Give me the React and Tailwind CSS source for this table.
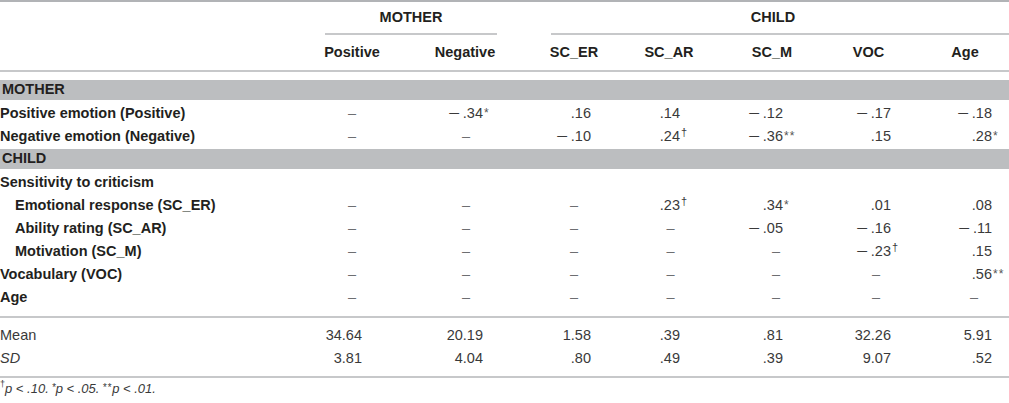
import React from "react";

const grid = "grid grid-cols-[300px_108px_111px_102px_99px_100px_97px_92px]";

// per column: header shift, right gap of the number, shift of the "–" placeholder
const cols = [
  { head: "Positive", headPad: "pr-[4px]", numPad: "pr-[46px]", dashPad: "pr-[4px]" },
  { head: "Negative", headPad: "pl-[3px]", numPad: "pr-[36px]", dashPad: "pl-[5px]" },
  { head: "SC_ER", headPad: "pl-[8px]", numPad: "pr-[30px]", dashPad: "pl-[8px]" },
  { head: "SC_AR", headPad: "pr-[3px]", numPad: "pr-[40px]", dashPad: "" },
  { head: "SC_M", headPad: "pl-[4px]", numPad: "pr-[37px]", dashPad: "pl-[12px]" },
  { head: "VOC", headPad: "", numPad: "pr-[26px]", dashPad: "pl-[15px]" },
  { head: "Age", headPad: "pl-[4px]", numPad: "pr-[17px]", dashPad: "pl-[22px]" },
];

const motherRows = [
  { label: "Positive emotion (Positive)", vals: ["–", "−.34|*", ".16", ".14", "−.12", "−.17", "−.18"] },
  { label: "Negative emotion (Negative)", vals: ["–", "–", "−.10", ".24|†", "−.36|**", ".15", ".28|*"] },
];

const childRows = [
  { label: "Sensitivity to criticism", vals: null },
  { label: "Emotional response (SC_ER)", indent: true, vals: ["–", "–", "–", ".23|†", ".34|*", ".01", ".08"] },
  { label: "Ability rating (SC_AR)", indent: true, vals: ["–", "–", "–", "–", "−.05", "−.16", "−.11"] },
  { label: "Motivation (SC_M)", indent: true, vals: ["–", "–", "–", "–", "–", "−.23|†", ".15"] },
  { label: "Vocabulary (VOC)", vals: ["–", "–", "–", "–", "–", "–", ".56|**"] },
  { label: "Age", vals: ["–", "–", "–", "–", "–", "–", "–"] },
];

const stats = [
  { label: "Mean", vals: ["34.64", "20.19", "1.58", ".39", ".81", "32.26", "5.91"] },
  { label: "SD", italic: true, vals: ["3.81", "4.04", ".80", ".49", ".39", "9.07", ".52"] },
];

function Cell({ value, col }) {
  if (value === "–") {
    return (
      <div className={`flex items-center justify-center text-[#6d6e71] ${col.dashPad}`}>–</div>
    );
  }
  const [num, sup] = value.split("|");
  const neg = num.startsWith("−");
  return (
    <div className={`flex items-center justify-end ${col.numPad}`}>
      <span className="whitespace-nowrap">
        {neg && (
          <span className="inline-block w-[15px]">
            <span className="inline-block origin-left scale-x-[1.4]">−</span>
          </span>
        )}
        {neg ? num.slice(1) : num}
        {sup && (
          <span className="inline-block w-0 whitespace-nowrap">
            {sup === "†" ? (
              <span className="relative -top-[5px] pl-[1px] text-[11px]">†</span>
            ) : (
              <span className="relative -top-[1px] pl-[1px] text-[12px] tracking-[1px] text-[#555]">{sup}</span>
            )}
          </span>
        )}
      </span>
    </div>
  );
}

function DataRow({ row }) {
  return (
    <div className={`${grid} h-[23px]`}>
      <div className={`flex items-center font-bold text-[#231f20] ${row.indent ? "pl-[15px]" : ""}`}>
        {row.label}
      </div>
      {row.vals && row.vals.map((v, i) => <Cell key={i} value={v} col={cols[i]} />)}
    </div>
  );
}

function Band({ title, className }) {
  return (
    <div className={`h-[20px] bg-[#bcbec0] flex items-center pl-[2px] font-bold text-[#231f20] ${className}`}>
      {title}
    </div>
  );
}

export default function App() {
  return (
    <div className="w-[1009px] h-[403px] bg-white font-['Liberation_Sans',Arial,sans-serif] text-[14.5px] text-[#3a3a3a] overflow-hidden">
      <div className="border-t-2 border-[#b1b3b6]">
        {/* group headers */}
        <div className={`${grid} h-[33px] font-bold text-[#231f20]`}>
          <div />
          <div className="col-span-2 flex">
            <div className="ml-[25px] mr-[22px] flex-1 flex items-center justify-center border-b-2 border-[#c7c8ca]">
              MOTHER
            </div>
          </div>
          <div className="col-span-5 flex">
            <div className="ml-[32px] flex-1 flex items-center justify-center pr-[14px] border-b-2 border-[#c7c8ca]">
              CHILD
            </div>
          </div>
        </div>
        {/* column headers */}
        <div className={`${grid} h-[37px] font-bold text-[#231f20] border-b-2 border-[#c7c8ca]`}>
          <div />
          {cols.map((c) => (
            <div key={c.head} className={`flex items-center justify-center ${c.headPad}`}>
              {c.head}
            </div>
          ))}
        </div>

        <Band title="MOTHER" className="mt-[8px]" />
        <div className="mt-[2px]">
          {motherRows.map((r) => (
            <DataRow key={r.label} row={r} />
          ))}
        </div>

        <Band title="CHILD" className="mt-[1px]" />
        <div className="mt-[2px]">
          {childRows.map((r) => (
            <DataRow key={r.label} row={r} />
          ))}
        </div>

        <div className="mt-[7px] border-t-2 border-[#c7c8ca] pt-[6px] pb-[6px] border-b-2">
          {stats.map((r) => (
            <div key={r.label} className={`${grid} h-[23px]`}>
              <div className={`flex items-center ${r.italic ? "italic" : ""}`}>{r.label}</div>
              {r.vals.map((v, i) => (
                <Cell key={i} value={v} col={cols[i]} />
              ))}
            </div>
          ))}
        </div>

        <div className="pt-[2px] text-[13px] italic text-[#3a3a3a] h-[20px] flex items-center">
          <span className="relative -top-[4px] text-[9px] not-italic">†</span>p &lt; .10.{" "}
          <span className="relative -top-[2px] text-[10px] pl-[3px]">*</span>p &lt; .05.{" "}
          <span className="relative -top-[2px] text-[10px] pl-[3px] tracking-[1px]">**</span>p &lt; .01.
        </div>
      </div>
    </div>
  );
}
